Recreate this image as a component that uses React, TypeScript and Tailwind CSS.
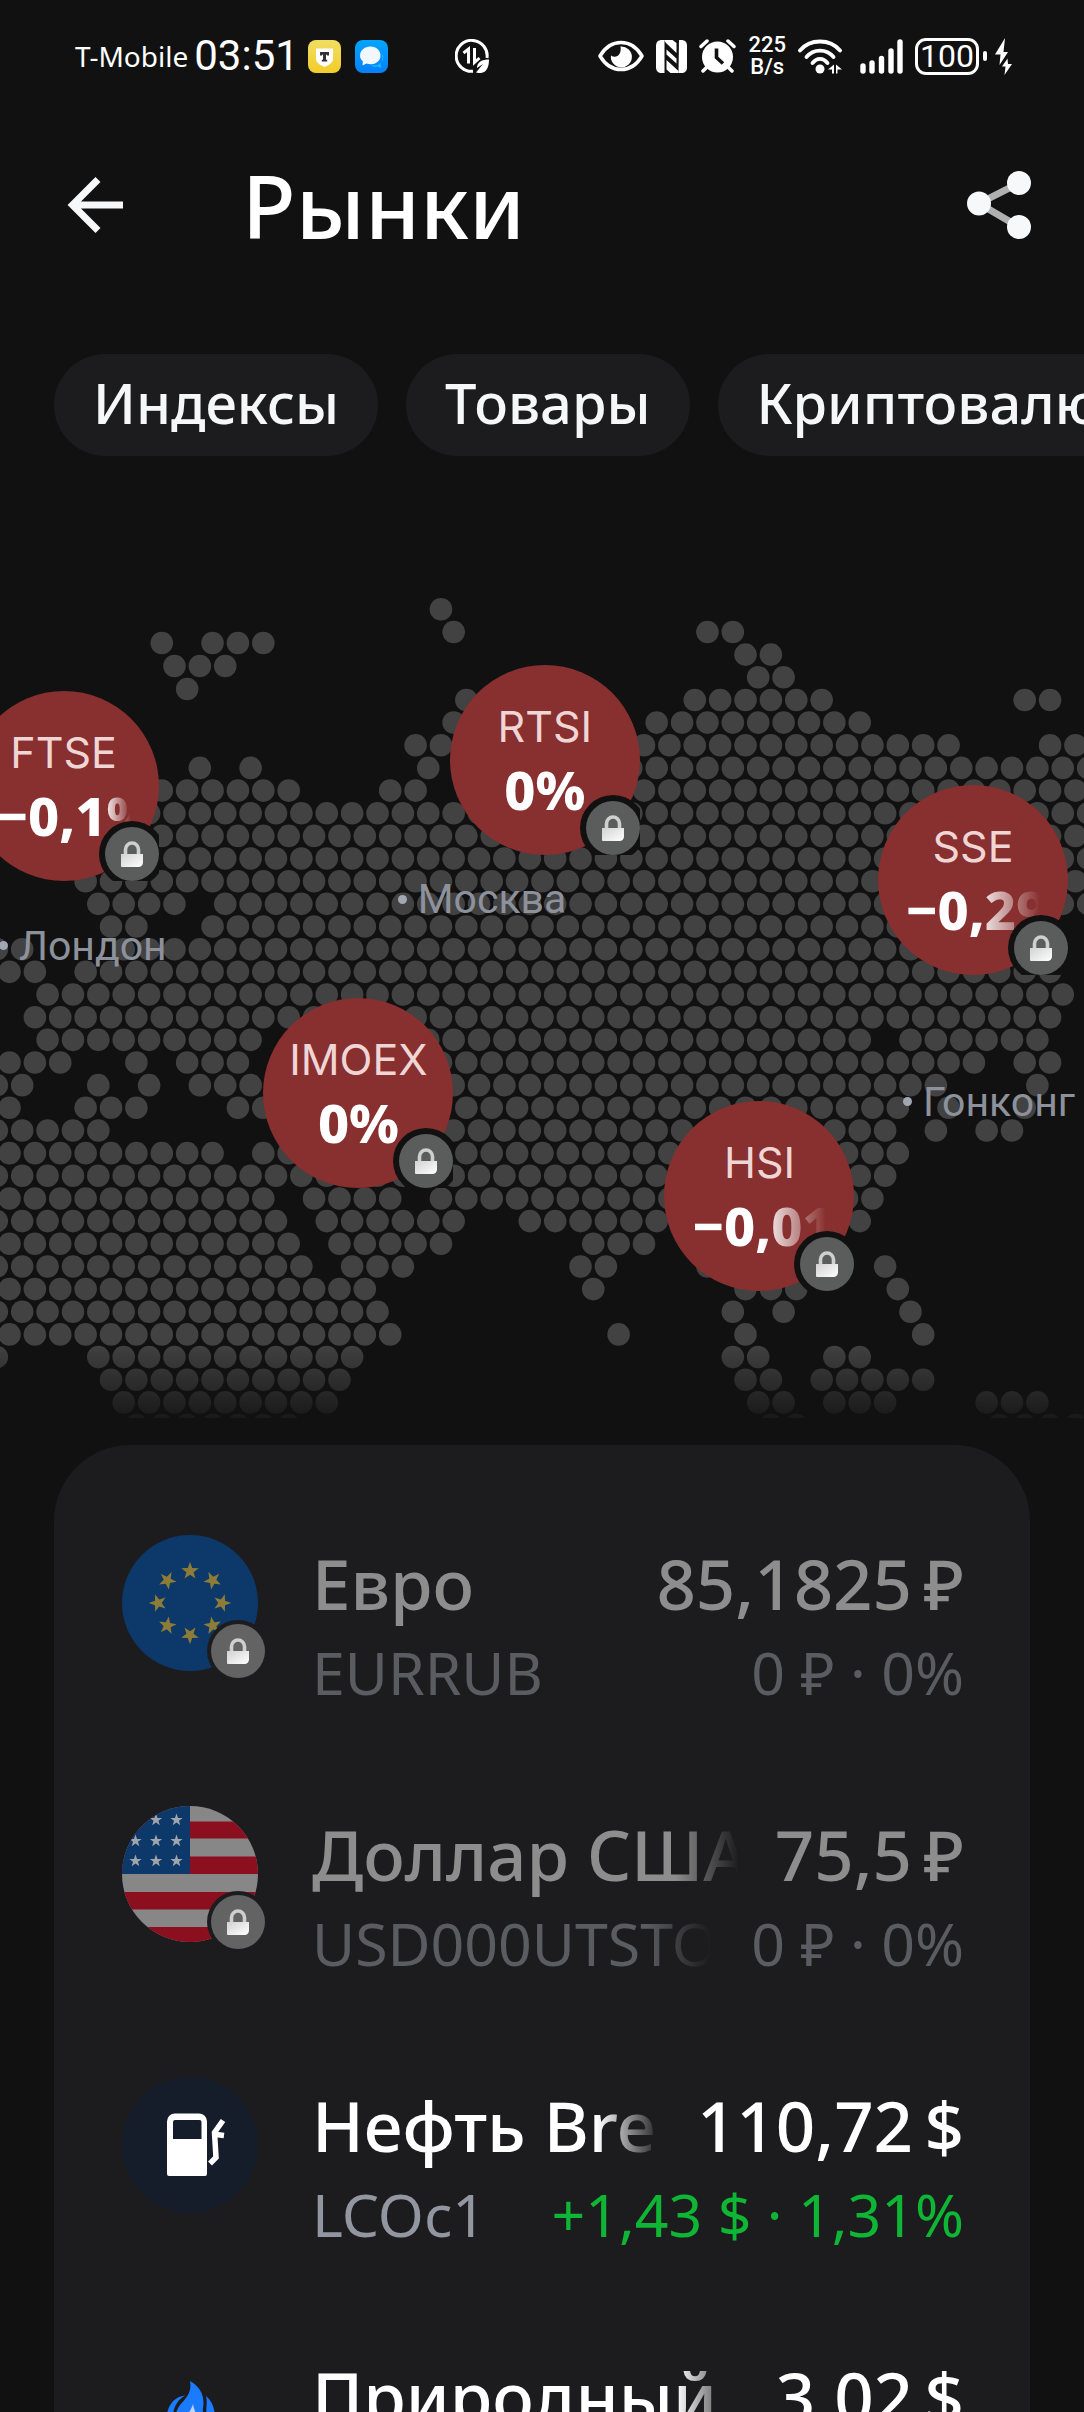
import React from "react";

/* ---------- dotted map ---------- */

const STEP = 12.69;
const ROW = 22.66;

// For each row of the map: [first, last] column spans; columns advance by two.
const LAND: [number, number][][] = [
  [[34, 34]],
  [[35, 35], [55, 57]],
  [[58, 60]],
  [[59, 61]],
  [[36, 36], [54, 64], [80, 82]],
  [[35, 35], [51, 67]],
  [[32, 34], [50, 74], [82, 84]],
  [[15, 15], [19, 19], [33, 33], [49, 85]],
  [[12, 22], [30, 32], [50, 84]],
  [[11, 25], [27, 85]],
  [[12, 84]],
  [[13, 85]],
  [[6, 84]],
  [[7, 13], [17, 85]],
  [[8, 10], [16, 78]],
  [[-1, 1], [9, 73]],
  [[0, 2], [6, 82]],
  [[3, 83]],
  [[2, 82]],
  [[3, 19], [23, 67], [71, 81]],
  [[0, 4], [10, 10], [14, 18], [34, 76], [80, 82]],
  [[-1, 1], [7, 7], [11, 11], [15, 19], [35, 73], [81, 81]],
  [[0, 0], [6, 10], [18, 20], [36, 70], [74, 74], [80, 80]],
  [[-1, 7], [35, 69], [73, 73], [77, 79]],
  [[0, 16], [20, 22], [36, 70]],
  [[-1, 31], [35, 69]],
  [[0, 20], [24, 30], [34, 68]],
  [[-1, 21], [25, 35], [41, 67]],
  [[0, 22], [26, 34], [46, 50]],
  [[-1, 23], [27, 31], [45, 47], [55, 55], [69, 69]],
  [[0, 28], [46, 46], [58, 62], [70, 70]],
  [[-1, 29], [57, 57], [61, 61], [71, 71]],
  [[0, 30], [48, 48], [58, 58], [72, 72]],
  [[-1, -1], [7, 27], [57, 59], [65, 67]],
  [[8, 26], [58, 60], [64, 72]],
  [[9, 25], [59, 61], [65, 69], [77, 81]],
  [[10, 22], [60, 62], [78, 84]],
];

const NORTH_ISLANDS: [number, number][] = [
  [12, 45], [16, 45], [18, 45], [20, 45],
  [13, 68], [15, 68], [17, 68],
  [14, 91],
];

function DottedMap() {
  const dots: React.ReactElement[] = [];
  LAND.forEach((spans, r) =>
    spans.forEach(([from, to]) => {
      for (let n = from; n <= to; n += 2) {
        dots.push(<circle key={`${r}-${n}`} cx={9.5 + n * STEP} cy={11.3 + r * ROW} r="11.3" />);
      }
    }),
  );
  return (
    <svg viewBox="0 0 1084 820" className="block w-full" aria-hidden="true">
      <defs>
        <linearGradient id="mapFade" x1="0" y1="745" x2="0" y2="835" gradientUnits="userSpaceOnUse">
          <stop offset="0" stopColor="#111111" stopOpacity="0" />
          <stop offset="1" stopColor="#111111" />
        </linearGradient>
      </defs>
      <g fill="#424242">
        {dots}
        {NORTH_ISLANDS.map(([n, y]) => (
          <circle key={`i${n}`} cx={9.5 + n * STEP} cy={y} r="11.3" />
        ))}
      </g>
      <rect x="0" y="745" width="1084" height="75" fill="url(#mapFade)" />
    </svg>
  );
}

/* ---------- small pieces ---------- */

function Lock() {
  return (
    <svg viewBox="0 0 22 28" className="h-7 w-[22px]" aria-hidden="true">
      <defs>
        <linearGradient id="lockBody" x1="0" y1="0" x2="1" y2="1">
          <stop offset="0" stopColor="#d2d2d2" />
          <stop offset="1" stopColor="#ffffff" />
        </linearGradient>
      </defs>
      <path d="M4.5 15V9.5a6.5 6.5 0 0 1 13 0V15" fill="none" stroke="#cfcfcf" strokeWidth="3.6" />
      <path d="M0 14h22v8.500a4.500 4.500 0 0 1-4.500 4.500H1a1 1 0 0 1-1-1z" fill="url(#lockBody)" />
    </svg>
  );
}

const VALUE_FADE: Record<number, string> = {
  5: "[mask-image:linear-gradient(to_right,#000_80%,transparent)]",
  6: "[mask-image:linear-gradient(to_right,#000_52%,transparent)]",
};

function Pin({ name, value, place }: { name: string; value: string; place: string }) {
  return (
    <div className={`absolute size-[190px] overflow-hidden ${place}`}>
      <button type="button" className="flex size-full flex-col items-center rounded-full bg-[#882f2f] px-7 pt-[35px]">
        <span className="font-['Inter',sans-serif] text-[43px] leading-[52px] whitespace-nowrap text-[#f0d5d5]">{name}</span>
        <span
          className={`max-w-full overflow-hidden text-[54px] leading-[74px] font-extrabold whitespace-nowrap text-white ${VALUE_FADE[value.length] ?? ""}`}
        >
          {value}
        </span>
      </button>
      <span className="absolute right-0 bottom-0 flex size-[54px] items-center justify-center rounded-full bg-[#5b5c5c] ring-[6px] ring-[#111111]">
        <Lock />
      </span>
    </div>
  );
}

function City({ name, place }: { name: string; place: string }) {
  return (
    <div className={`absolute flex items-center gap-[11px] ${place}`}>
      <span className="size-[9px] rounded-full bg-[#a3a7b3]" />
      <span className="font-['Roboto',sans-serif] text-[41px] leading-[48px] whitespace-nowrap text-[#8d919c]">{name}</span>
    </div>
  );
}

/* ---------- status bar ---------- */

function StatusBar() {
  return (
    <div className="flex h-28 shrink-0 items-center justify-between pr-[72px] pl-[75px] text-white">
      <div className="flex items-center">
        <span className="text-[28px] leading-10">T-Mobile</span>
        <span className="ml-[6px] font-['Roboto',sans-serif] text-[42px] leading-10">03:51</span>
        <svg viewBox="0 0 33 33" className="ml-[9px] size-[33px]" aria-hidden="true">
          <defs>
            <linearGradient id="bank" x1="0" y1="0" x2="0" y2="1">
              <stop offset="0" stopColor="#f0de62" />
              <stop offset="1" stopColor="#f2cc2a" />
            </linearGradient>
          </defs>
          <rect width="33" height="33" rx="8" fill="url(#bank)" />
          <path d="M8 8.500h17v10c0 4-3 6-8.500 8.500C11 24.500 8 22.500 8 18.500z" fill="#fff" />
          <path d="M12 12h9v3.500h-2v-.8h-1v5h1.200v1.800h-5.400v-1.800H15v-5h-1v.8h-2z" fill="#333" />
        </svg>
        <svg viewBox="0 0 33 33" className="ml-[14px] size-[33px]" aria-hidden="true">
          <defs>
            <linearGradient id="chat" x1="0" y1="0" x2="0" y2="1">
              <stop offset="0" stopColor="#03a5ff" />
              <stop offset="1" stopColor="#0680fa" />
            </linearGradient>
          </defs>
          <rect width="33" height="33" rx="8" fill="url(#chat)" />
          <path d="M16 24a8 8 0 0 0 11-11c1 6 0 9-1.500 11l1 4-4-1.500c-3 1-5 0-6.500-2.500z" fill="#19b9ff" />
          <path d="M15.500 6.500c6 0 10 4 10 9s-4 8.800-10 8.800c-1.500 0-2.800-.2-4-.7L7.500 25.500l.3-4.200C6 19.700 5 17.800 5 15.500c0-5 4.500-9 10.500-9z" fill="#f0f7ff" />
        </svg>
        <svg viewBox="0 0 34 34" className="ml-[67px] size-[34px]" aria-hidden="true">
          <path d="M18 32.300A15.500 15.500 0 1 1 32 19" fill="none" stroke="#fff" strokeWidth="3" />
          <path d="M8.500 14L13.500 10v14.500M19.500 9v14.500l5-4.500" fill="none" stroke="#fff" strokeWidth="3" />
          <path d="M34 20.500c-7 0-12 2.500-12 8.500l6-4-7 8.500c9 2.500 13-3.500 13-13z" fill="#fff" />
        </svg>
      </div>
      <div className="flex items-center gap-3">
        <svg viewBox="0 0 46 32" className="h-8 w-[46px]" aria-hidden="true">
          <path d="M2 16C7 7.500 14 2.500 23 2.500S39 7.500 44 16C39 24.500 32 29.500 23 29.500S7 24.500 2 16z" fill="none" stroke="#fff" strokeWidth="3.500" strokeLinejoin="round" />
          <path d="M22.500 6.500A10.500 10.500 0 1 1 13 15.500c5 3.500 11-.5 9.500-9z" fill="#fff" />
        </svg>
        <svg viewBox="0 0 31 33" className="h-[33px] w-[31px]" aria-hidden="true">
          <path d="M6 0h2.500v33H6C2 33 0 31 0 27V6C0 2 2 0 6 0z" fill="#fff" />
          <path d="M23 0h2c4 0 6 2 6 6v21c0 4-2 6-6 6h-2.500z" fill="#fff" />
          <path d="M8 0h8.500l4 3v10L10 3zM22.500 33H14.500L10.500 29.500V20l12 11z" fill="#fff" />
          <path d="M10.500 9.500l10 9v5l-10-9z" fill="#fff" />
        </svg>
        <svg viewBox="0 0 37 34" className="h-[34px] w-[37px]" aria-hidden="true">
          <circle cx="18.500" cy="18" r="15.500" fill="#fff" />
          <path d="M8 28l-4 4M29 28l4 4M2 7.500L8 2M35 7.500L29 2" stroke="#fff" strokeWidth="3.500" strokeLinecap="round" />
          <path d="M17.500 9.500V18.500l6.500 6" fill="none" stroke="#111" strokeWidth="3.600" />
        </svg>
        <div className="flex flex-col items-center font-['Roboto',sans-serif] text-[22px] leading-[22px] font-medium">
          <span>225</span>
          <span>B/s</span>
        </div>
        <svg viewBox="0 0 44 35" className="h-[35px] w-11" aria-hidden="true">
          <g fill="none" stroke="#fff" strokeWidth="3.800" strokeLinecap="round">
            <path d="M2 11.500C12-.5 32-.5 42 11.500" />
            <path d="M8.500 18C15.500 9.500 28.500 9.500 35.500 18" />
            <path d="M14.500 24C19 18.500 25 18.500 29.500 24" />
          </g>
          <circle cx="22" cy="30" r="4.500" fill="#fff" />
          <path d="M30 30.500l6-5v9h-2v-4zM44 30.500h-4.500v4h-1.500v-9z" fill="#fff" />
        </svg>
        <svg viewBox="0 0 43 35" className="ml-[6px] h-[35px] w-[43px]" aria-hidden="true">
          <path d="M3 27v5M12 24v8M21.500 19.500v12.500M31 12v20M40 3v29" stroke="#fff" strokeWidth="5.400" strokeLinecap="round" />
        </svg>
        <div className="flex items-center gap-1">
          <span className="flex h-[37px] w-16 items-center justify-center rounded-[11px] border-[3px] border-white font-['Roboto',sans-serif] text-[32px] leading-8">
            100
          </span>
          <span className="h-[10px] w-1 rounded-full bg-white" />
        </div>
        <svg viewBox="0 0 17 37" className="-ml-1 h-[37px] w-[17px]" aria-hidden="true">
          <path d="M10 0L0 16.500h5.500L4.500 27 13 14H8.500zM12.500 20.500L7 28.500h3.500L9.500 37 17 26h-4z" fill="#fff" />
        </svg>
      </div>
    </div>
  );
}

/* ---------- instrument icons ---------- */

function star(cx: number, cy: number, r: number, turn = 0) {
  return Array.from({ length: 10 }, (_, i) => {
    const a = turn - Math.PI / 2 + (i * Math.PI) / 5;
    const q = i % 2 ? r * 0.4 : r;
    return `${(cx + q * Math.cos(a)).toFixed(2)},${(cy + q * Math.sin(a)).toFixed(2)}`;
  }).join(" ");
}

function EuroFlag() {
  return (
    <svg viewBox="0 0 136 136" className="size-full" aria-hidden="true">
      <circle cx="68" cy="68" r="68" fill="#0d386a" />
      <g fill="#8c7c38">
        {Array.from({ length: 8 }, (_, i) => {
          const t = (i * Math.PI) / 4;
          return <polygon key={i} points={star(68 + 32 * Math.sin(t), 68 - 32 * Math.cos(t), 9.3, t)} />;
        })}
      </g>
    </svg>
  );
}

function UsaFlag() {
  return (
    <svg viewBox="0 0 136 136" className="size-full" aria-hidden="true">
      <clipPath id="usa">
        <circle cx="68" cy="68" r="68" />
      </clipPath>
      <g clipPath="url(#usa)">
        <rect width="136" height="136" fill="#878787" />
        <path d="M0 15.500h136v17H0zM0 50.500h136v17.500H0zM0 86h136v17.500H0zM0 121h136v15H0z" fill="#8c0f20" />
        <rect width="68" height="68" fill="#0d386a" />
        <g fill="#a0a4ad">
          {[14, 35, 55].map((y) =>
            [13.5, 34, 54.5].map((x) => (y === 14 && x === 13.5 ? null : <polygon key={`${x}-${y}`} points={star(x, y, 6.5)} />)),
          )}
        </g>
      </g>
    </svg>
  );
}

function FuelPump() {
  return (
    <svg viewBox="0 0 136 136" className="size-full" aria-hidden="true">
      <circle cx="68" cy="68" r="68" fill="#151d2b" />
      <path d="M53 36.500h24a8 8 0 0 1 8 8V97a2 2 0 0 1-2 2H47a2 2 0 0 1-2-2V44.500a8 8 0 0 1 8-8zM53 43a2 2 0 0 0-2 2v17h28.500V45a2 2 0 0 0-2-2z" fill="#fff" fillRule="evenodd" />
      <path d="M101 43.500L92.500 55.500 94 80.500 88 86.500M94 57.500L102 58.500" fill="none" stroke="#fff" strokeWidth="5.500" />
    </svg>
  );
}

function Flame() {
  return (
    <svg viewBox="0 0 136 136" className="size-full" aria-hidden="true">
      <g fill="#1b7bff">
        <path d="M68 33C79 39 83 49 81 60C80 67 84 70 84 78C84 92 76 98 68 98C60 98 53 92 53 78C53 70 53 64 58 57C64 50 70 45 68 33z" />
        <path d="M63 47.500C54 53 51 61 51 70C49 78 52 86 55 92C47 87 43 78 44 70C46 58 51 49 63 47.500z" />
        <path d="M84 48C91 54 93 62 93 70C93 80 89 88 83 92C87 84 88 76 85 68C83 61 86 56 84 48z" />
      </g>
      <path d="M71 56C72 64 79 72 77 82C75 90 61 90 60 80C60 71 68 66 71 56z" fill="#bdd5fa" />
    </svg>
  );
}

/* ---------- quotes ---------- */

type Quote = {
  title: string;
  ticker: string;
  price: string;
  change: string;
  icon: React.ReactElement;
  locked?: boolean;
  rising?: boolean;
};

const QUOTES: Quote[] = [
  { title: "Евро", ticker: "EURRUB", price: "85,1825\u2009₽", change: "0 ₽ · 0%", icon: <EuroFlag />, locked: true },
  { title: "Доллар США", ticker: "USD000UTSTOM", price: "75,5\u2009₽", change: "0 ₽ · 0%", icon: <UsaFlag />, locked: true },
  { title: "Нефть Brent", ticker: "LCOc1", price: "110,72\u2009$", change: "+1,43 $ · 1,31%", icon: <FuelPump />, rising: true },
  { title: "Природный газ", ticker: "NGc1", price: "3,02\u2009$", change: "+0,01 $ · 0,33%", icon: <Flame />, rising: true },
];

const FADE = "[mask-image:linear-gradient(to_right,#000_calc(100%-64px),transparent)]";

function QuoteRow({ q }: { q: Quote }) {
  const strong = q.locked ? "text-[#8d8d8d]" : "text-white";
  const weak = q.locked ? "text-[#5b5c62]" : "text-[#9296a0]";
  return (
    <li>
      <a href="#" className="flex items-start gap-[54px] pb-[88px]">
        <span className="relative size-[136px] shrink-0">
          {q.icon}
          {q.locked && (
            <span className="absolute -right-[7px] -bottom-[7px] flex size-[54px] items-center justify-center rounded-full bg-[#636363] ring-4 ring-[#1c1c1e]">
              <Lock />
            </span>
          )}
        </span>
        <span className="flex min-w-0 flex-1 flex-col pt-[5px]">
          <span className={`flex gap-9 text-[69px] leading-[86px] font-medium ${strong}`}>
            <span className={`min-w-0 flex-1 overflow-hidden whitespace-nowrap ${FADE}`}>{q.title}</span>
            <span className="whitespace-nowrap">{q.price}</span>
          </span>
          <span className={`flex gap-10 text-[59px] leading-[92px] ${weak}`}>
            <span className={`min-w-0 flex-1 overflow-hidden whitespace-nowrap ${q.ticker.length > 6 ? FADE : ""}`}>{q.ticker}</span>
            <span className={`whitespace-nowrap ${q.rising ? "text-[#0fb534]" : ""}`}>{q.change}</span>
          </span>
        </span>
      </a>
    </li>
  );
}

export default function App() {
  return (
    <div className="flex h-screen flex-col overflow-hidden bg-[#111111] font-['Noto_Sans',sans-serif] text-white">
      <StatusBar />

      <header className="flex h-[186px] shrink-0 items-center pr-[53px] pl-[67px]">
        <button type="button" aria-label="Назад" className="shrink-0">
          <svg viewBox="0 0 58 58" className="size-[58px]" aria-hidden="true">
            <path d="M56 29H7M31 3.500L5.500 29 31 54.500" fill="none" stroke="#f7f8f9" strokeWidth="7" />
          </svg>
        </button>
        <h1 className="ml-[117px] flex-1 text-[88px] leading-[104px] font-medium">Рынки</h1>
        <button type="button" aria-label="Поделиться" className="shrink-0">
          <svg viewBox="0 0 64 68" className="h-[68px] w-16" aria-hidden="true">
            <path d="M52 12L12 32.500 52 56" fill="none" stroke="#b0b0b0" strokeWidth="7" />
            <g fill="#f7f8f9">
              <circle cx="52" cy="12" r="12" />
              <circle cx="12" cy="32.500" r="12" />
              <circle cx="52" cy="56" r="12" />
            </g>
          </svg>
        </button>
      </header>

      <nav className="mt-14 flex shrink-0 gap-7 overflow-hidden pl-[54px]">
        {["Индексы", "Товары", "Криптовалюты"].map((t) => (
          <button
            key={t}
            type="button"
            className="h-[102px] shrink-0 rounded-full bg-[#1c1c1e] px-[39px] pb-[5px] text-[56px] leading-[97px] font-medium whitespace-nowrap text-[#f6f7f8]"
          >
            {t}
          </button>
        ))}
      </nav>

      <section className="relative mt-[142px] shrink-0" aria-label="Карта рынков">
        <DottedMap />
        <City name="Лондон" place="left-[-0.1%] top-[39.5%]" />
        <City name="Москва" place="left-[36.7%] top-[33.8%]" />
        <City name="Гонконг" place="left-[83.3%] top-[58.5%]" />
        <Pin name="FTSE" value="−0,1%" place="left-[-2.9%] top-[11.3%]" />
        <Pin name="RTSI" value="0%" place="left-[41.5%] top-[8.2%]" />
        <Pin name="SSE" value="−0,29%" place="left-[81%] top-[22.8%]" />
        <Pin name="IMOEX" value="0%" place="left-[24.3%] top-[48.8%]" />
        <Pin name="HSI" value="−0,01%" place="left-[61.3%] top-[61.3%]" />
      </section>

      <main className="mx-[54px] mt-[27px] shrink-0 rounded-[76px] bg-[#1c1c1e] pt-[90px] pr-[66px] pl-[68px]">
        <ul>
          {QUOTES.map((q) => (
            <QuoteRow key={q.title} q={q} />
          ))}
        </ul>
      </main>
    </div>
  );
}
